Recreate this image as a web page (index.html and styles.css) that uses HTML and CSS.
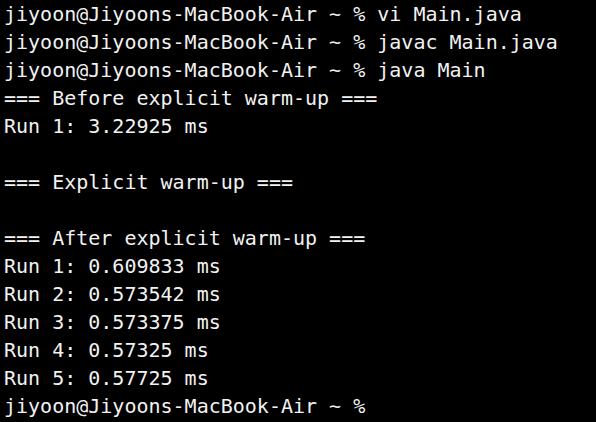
FILE: index.html
```html
<!DOCTYPE html>
<html lang="en">
<head>
<meta charset="utf-8">
<title>Terminal</title>
<link rel="stylesheet" href="styles.css">
</head>
<body>
<pre class="term">jiyoon@Jiyoons-MacBook-Air ~ % vi Main.java
jiyoon@Jiyoons-MacBook-Air ~ % javac Main.java
jiyoon@Jiyoons-MacBook-Air ~ % java Main
=== Before explicit warm-up ===
Run 1: 3.22925 ms

=== Explicit warm-up ===

=== After explicit warm-up ===
Run 1: 0.609833 ms
Run 2: 0.573542 ms
Run 3: 0.573375 ms
Run 4: 0.57325 ms
Run 5: 0.57725 ms
jiyoon@Jiyoons-MacBook-Air ~ % </pre>
</body>
</html>
```
FILE: styles.css
```css
html, body {
  margin: 0;
  padding: 0;
  background: #000;
  height: 100%;
  overflow: hidden;
}
.term {
  margin: 0;
  padding: 0 0 0 4px;
  font-family: "DejaVu Sans Mono", monospace;
  font-size: 20px;
  line-height: 28px;
  color: #f2f2f2;
  white-space: pre;
}
```
